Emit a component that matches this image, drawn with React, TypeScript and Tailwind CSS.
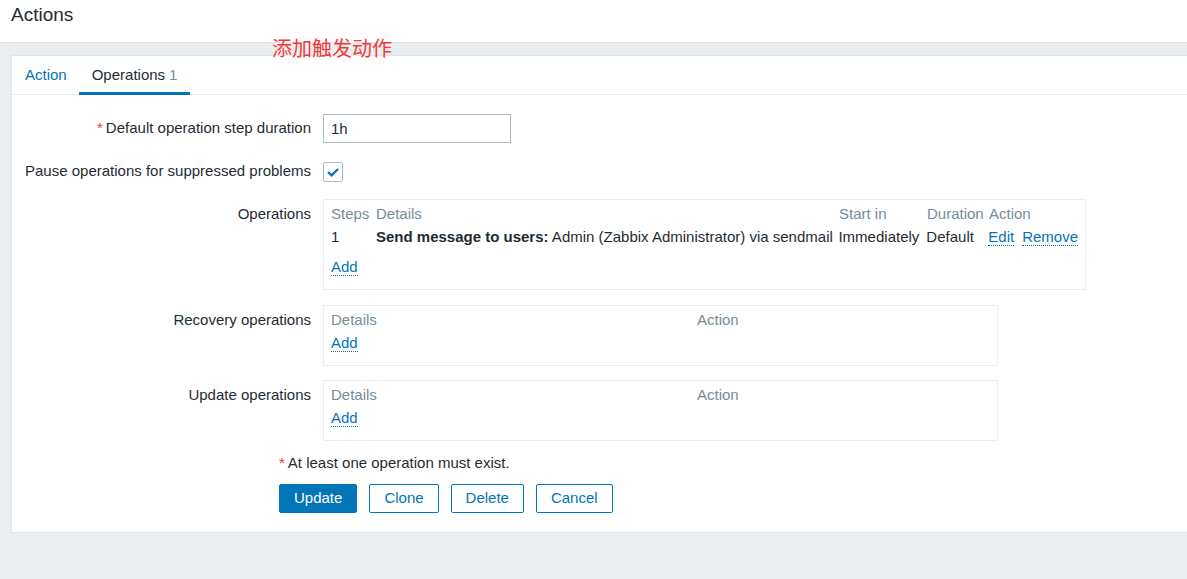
import React from "react";

const Link = ({ children }: { children: React.ReactNode }) => (
  <span className="text-[#0275b8] border-b border-dotted border-[#0275b8] leading-[17px]">{children}</span>
);

const Label = ({ children, req, center }: { children: React.ReactNode; req?: boolean; center?: boolean }) => (
  <div className={`w-[299px] shrink-0 text-right ${center ? "self-center" : "pt-[5px] leading-[20px]"}`}>
    {req && <span className="text-[#e33734] mr-[3px]">*</span>}
    {children}
  </div>
);

export default function App() {
  return (
    <div className="min-h-screen bg-[#ebeef0] overflow-hidden font-['Liberation_Sans',Arial,sans-serif] text-[15px] text-[#1f2c33] relative">
      <div className="h-[43px] bg-white border-b border-[#dfe4e7] pl-[11px] pt-[2px]">
        <h1 className="text-[19px] leading-[26px] text-[#1f2c33]">Actions</h1>
      </div>
      <div className="absolute left-[272px] top-[36px] text-[20px] leading-[24px] text-[#f03a3a] font-['Noto_Sans_CJK_SC',sans-serif]">添加触发动作</div>
      <div className="pt-[12px] pl-[11px]">
        <div className="bg-white border border-[#dfe4e7] w-[1200px] pb-[19px]">
          <div className="flex h-[39px] border-b border-[#ebeef0] pl-0">
            <div className="h-[38px] pl-[13px] pr-[12px] flex items-center text-[#0275b8]">Action</div>
            <div className="h-[39px] -mb-px px-[13px] flex items-center border-b-[3px] border-[#0275b8] pt-[3px]">
              Operations <span className="text-[#768d99] ml-[4px]">1</span>
            </div>
          </div>

          <div className="flex gap-[12px] mt-[19px] h-[29px]">
            <Label req center>Default operation step duration</Label>
            <div className="w-[188px] h-[29px] border border-[#acbbc2] pl-[7px] pt-[1px] flex items-center">1h</div>
          </div>

          <div className="flex gap-[12px] mt-[18px] h-[21px] items-center">
            <Label center>Pause operations for suppressed problems</Label>
            <div className="w-[20px] h-[20px] border border-[#acbbc2] rounded-[2px] flex items-center justify-center">
              <svg width="16" height="16" viewBox="0 0 16 16">
                <path d="M3 8 L6.6 11.4 L13 5" fill="none" stroke="#0275b8" strokeWidth="2.2" />
              </svg>
            </div>
          </div>

          <div className="flex gap-[12px] mt-[17px]">
            <Label>Operations</Label>
            <div className="w-[763px] h-[91px] border border-[#ebeef0] px-[7px] pt-[4px]">
              <div className="flex h-[20px] items-center text-[#768d99]">
                <div className="w-[45px]">Steps</div>
                <div className="w-[463px]">Details</div>
                <div className="w-[88px]">Start in</div>
                <div className="w-[62px]">Duration</div>
                <div>Action</div>
              </div>
              <div className="flex h-[26px] items-center">
                <div className="w-[45px]">1</div>
                <div className="w-[463px] whitespace-nowrap">
                  <b>Send message to users:</b> Admin (Zabbix Administrator) via sendmail
                </div>
                <div className="w-[88px]">Immediately</div>
                <div className="w-[62px]">Default</div>
                <div className="flex gap-[8px]">
                  <Link>Edit</Link>
                  <Link>Remove</Link>
                </div>
              </div>
              <div className="mt-[7px] h-[20px] flex items-center">
                <Link>Add</Link>
              </div>
            </div>
          </div>

          <div className="flex gap-[12px] mt-[15px]">
            <Label>Recovery operations</Label>
            <div className="w-[675px] h-[61px] border border-[#ebeef0] px-[7px] pt-[4px]">
              <div className="flex h-[20px] items-center text-[#768d99]">
                <div className="w-[366px]">Details</div>
                <div>Action</div>
              </div>
              <div className="mt-[3px] h-[20px] flex items-center">
                <Link>Add</Link>
              </div>
            </div>
          </div>

          <div className="flex gap-[12px] mt-[14px]">
            <Label>Update operations</Label>
            <div className="w-[675px] h-[61px] border border-[#ebeef0] px-[7px] pt-[4px]">
              <div className="flex h-[20px] items-center text-[#768d99]">
                <div className="w-[366px]">Details</div>
                <div>Action</div>
              </div>
              <div className="mt-[3px] h-[20px] flex items-center">
                <Link>Add</Link>
              </div>
            </div>
          </div>

          <div className="ml-[267px] mt-[12px] h-[20px] flex items-center">
            <span className="text-[#e33734] mr-[3px]">*</span>At least one operation must exist.
          </div>

          <div className="ml-[267px] mt-[11px] flex gap-[12px]">
            <button className="h-[29px] px-[14px] rounded-[2px] bg-[#0275b8] border border-[#0275b8] text-white">Update</button>
            <button className="h-[29px] px-[14px] rounded-[2px] border border-[#0275b8] text-[#0275b8] bg-white">Clone</button>
            <button className="h-[29px] px-[14px] rounded-[2px] border border-[#0275b8] text-[#0275b8] bg-white">Delete</button>
            <button className="h-[29px] px-[14px] rounded-[2px] border border-[#0275b8] text-[#0275b8] bg-white">Cancel</button>
          </div>
        </div>
      </div>
    </div>
  );
}
